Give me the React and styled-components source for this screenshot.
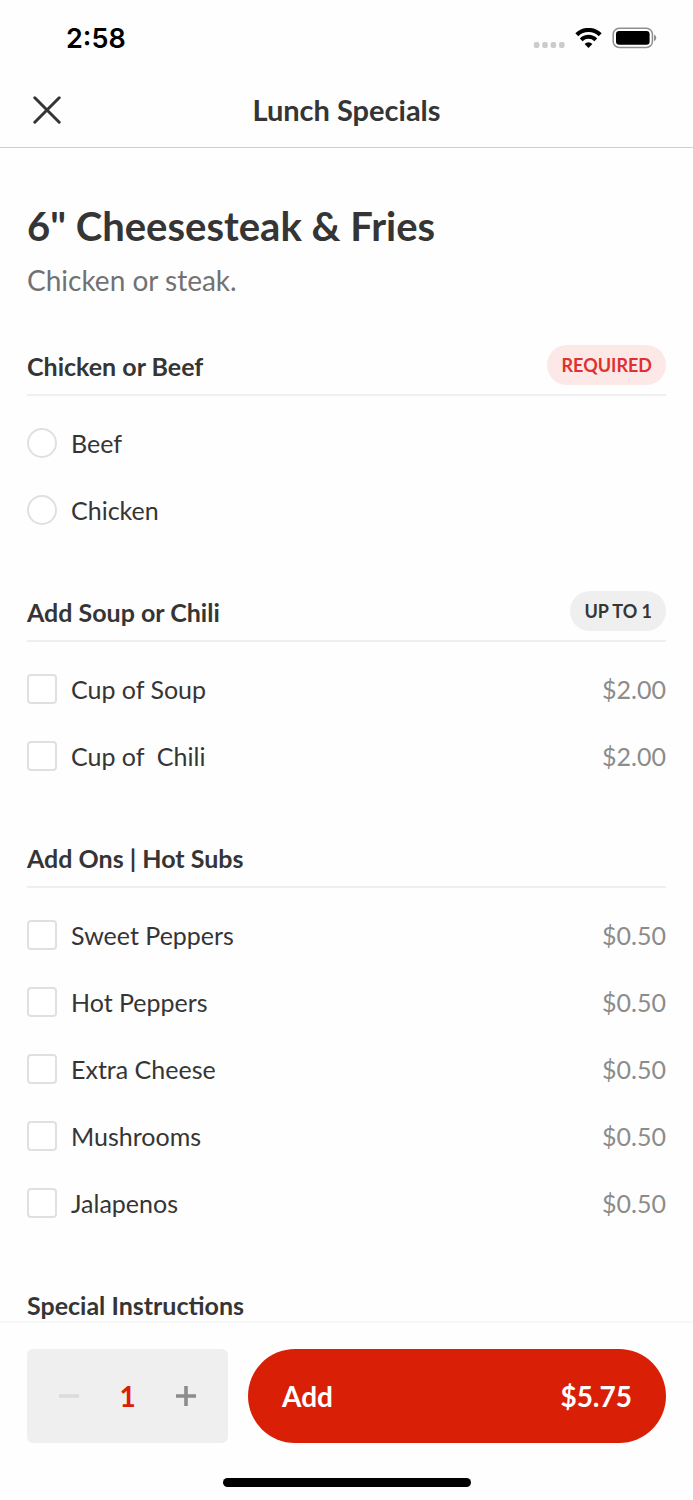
import React, { useState } from 'react';
import styled, { createGlobalStyle } from 'styled-components';

const GlobalStyle = createGlobalStyle`
  * {
    box-sizing: border-box;
  }

  body {
    margin: 0;
    background: #fefefe;
    color: #353535;
    font-family: Lato, Carlito, "Liberation Sans", sans-serif;
  }

  button,
  input {
    font: inherit;
    margin: 0;
  }
`;

const Screen = styled.div`
  display: flex;
  flex-direction: column;
  height: 100vh;
`;

const StatusBar = styled.div`
  display: flex;
  justify-content: space-between;
  align-items: center;
  height: 76px;
  padding: 0 36px 0 66px;
  flex-shrink: 0;
`;

const Time = styled.time`
  padding-top: 2px;
  color: #000;
  font-family: Inter, "Liberation Sans", sans-serif;
  font-size: 27px;
  font-weight: 600;
  line-height: 32px;
`;

const StatusIcons = styled.div`
  display: flex;
  align-items: center;
  gap: 10px;
`;

const NavBar = styled.header`
  display: grid;
  grid-template-columns: 40px 1fr 40px;
  align-items: center;
  height: 72px;
  padding: 0 27px 4px;
  border-bottom: 1px solid #cfcfcf;
  flex-shrink: 0;
`;

const NavTitle = styled.div`
  font-size: 29px;
  font-weight: 700;
  line-height: 34px;
  text-align: center;
`;

const IconButton = styled.button`
  display: flex;
  align-items: center;
  justify-content: center;
  width: 40px;
  height: 40px;
  padding: 0;
  border: 0;
  background: none;
  color: ${(props) => props.$color || '#353535'};
  cursor: pointer;

  &:disabled {
    color: #dcdcdc;
    cursor: default;
  }
`;

const Content = styled.main`
  flex: 1;
  min-height: 0;
  overflow-y: auto;
  scrollbar-width: none;
  padding: 53px 27px 0;
`;

const Title = styled.h1`
  margin: 0;
  font-size: 40px;
  font-weight: 700;
  line-height: 50px;
`;

const Description = styled.p`
  margin: 12px 0 48px;
  color: #727272;
  font-size: 28px;
  line-height: 34px;
`;

const Section = styled.section`
  margin-bottom: 48px;
`;

const SectionHeader = styled.div`
  display: flex;
  justify-content: space-between;
  align-items: flex-start;
  height: 51px;
  border-bottom: 2px solid #efefef;
`;

const SectionTitle = styled.h2`
  margin: 0;
  padding-top: 5px;
  font-size: 25px;
  font-weight: 700;
  line-height: 32px;
`;

const Badge = styled.span`
  padding: 0 14px;
  border-radius: 20px;
  background: ${(props) => (props.$required ? '#fde8e8' : '#efefef')};
  color: ${(props) => (props.$required ? '#e03131' : '#353535')};
  font-size: 18px;
  font-weight: 700;
  line-height: 40px;
`;

const Options = styled.div`
  padding-top: 13px;
`;

const Option = styled.label`
  display: flex;
  align-items: center;
  gap: 14px;
  height: 67px;
  font-size: 25px;
  line-height: 32px;
  cursor: pointer;
`;

const OptionInput = styled.input`
  appearance: none;
  width: 30px;
  height: 30px;
  border: 2px solid #e0e0e0;
  border-radius: ${(props) => (props.type === 'radio' ? '50%' : '4px')};
  background: #fff;
  flex-shrink: 0;

  &:checked {
    border-color: #d92007;
    background: #d92007;
    box-shadow: inset 0 0 0 5px #fff;
  }
`;

const OptionName = styled.span`
  flex: 1;
  white-space: pre;
`;

const OptionPrice = styled.span`
  color: #8c8c8c;
`;

const Footer = styled.footer`
  display: flex;
  flex-direction: column;
  align-items: center;
  flex-shrink: 0;
  padding: 26px 27px 13px;
  border-top: 2px solid #f7f7f7;
`;

const Actions = styled.div`
  display: flex;
  gap: 20px;
  width: 100%;
`;

const Stepper = styled.div`
  display: flex;
  justify-content: space-between;
  align-items: center;
  width: 201px;
  height: 94px;
  padding: 0 22px;
  border-radius: 6px;
  background: #efefef;
`;

const Quantity = styled.output`
  color: #d92007;
  font-size: 28px;
  font-weight: 700;
  line-height: 34px;
`;

const AddButton = styled.button`
  display: flex;
  justify-content: space-between;
  align-items: center;
  flex: 1;
  height: 94px;
  padding: 0 34px;
  border: 0;
  border-radius: 47px;
  background: #d92007;
  color: #fff;
  font-size: 28px;
  font-weight: 700;
  line-height: 34px;
  cursor: pointer;
`;

const HomeIndicator = styled.div`
  width: 248px;
  height: 9px;
  margin-top: 35px;
  border-radius: 5px;
  background: #000;
`;

const groups = [
  {
    title: 'Chicken or Beef',
    badge: 'REQUIRED',
    required: true,
    type: 'radio',
    options: [{ name: 'Beef' }, { name: 'Chicken' }],
  },
  {
    title: 'Add Soup or Chili',
    badge: 'UP TO 1',
    type: 'checkbox',
    options: [
      { name: 'Cup of Soup', price: 2 },
      { name: 'Cup of  Chili', price: 2 },
    ],
  },
  {
    title: 'Add Ons | Hot Subs',
    type: 'checkbox',
    options: [
      { name: 'Sweet Peppers', price: 0.5 },
      { name: 'Hot Peppers', price: 0.5 },
      { name: 'Extra Cheese', price: 0.5 },
      { name: 'Mushrooms', price: 0.5 },
      { name: 'Jalapenos', price: 0.5 },
    ],
  },
];

function SignalIcon() {
  return (
    <svg width="32" height="22" viewBox="0 0 32 22" fill="#cbcbcb">
      <rect x="0.8" y="15" width="5.6" height="6" rx="2" />
      <rect x="9.2" y="15" width="5.6" height="6" rx="2" />
      <rect x="17.6" y="15" width="5.6" height="6" rx="2" />
      <rect x="26" y="15" width="5.6" height="6" rx="2" />
    </svg>
  );
}

function WifiIcon() {
  return (
    <svg width="27" height="20" viewBox="0 0 27 20">
      <path d="M1.8 6.8a16.6 16.6 0 0 1 23.4 0" fill="none" stroke="#000" strokeWidth="4.2" />
      <path d="M6.2 11.8a10.4 10.4 0 0 1 14.6 0" fill="none" stroke="#000" strokeWidth="4" />
      <path d="M13.5 20l-3.9-4.1a5.6 5.6 0 0 1 7.8 0z" fill="#000" />
    </svg>
  );
}

function BatteryIcon() {
  return (
    <svg width="45" height="22" viewBox="0 0 45 22">
      <rect x="1.2" y="1.2" width="39.2" height="19.2" rx="6" fill="none" stroke="#8f8f8f" strokeWidth="1.5" />
      <rect x="4" y="4" width="33.6" height="13.8" rx="3.2" fill="#000" />
      <path d="M42 7.6c3 1.4 3 5.2 0 6.6z" fill="#8f8f8f" />
    </svg>
  );
}

function CloseIcon() {
  return (
    <svg width="28" height="28" viewBox="0 0 28 28" fill="none" stroke="currentColor" strokeWidth="3" strokeLinecap="round">
      <path d="M1.8 1.8l24.4 24.4M26.2 1.8L1.8 26.2" />
    </svg>
  );
}

function StepIcon({ plus }) {
  return (
    <svg width="20" height="20" viewBox="0 0 20 20" fill="none" stroke="currentColor" strokeWidth="3.6">
      <path d={plus ? 'M0 10h20M10 0v20' : 'M0 10h20'} />
    </svg>
  );
}

function OptionGroup({ group }) {
  return (
    <Section>
      <SectionHeader>
        <SectionTitle>{group.title}</SectionTitle>
        {group.badge && <Badge $required={group.required}>{group.badge}</Badge>}
      </SectionHeader>
      <Options>
        {group.options.map((option) => (
          <Option key={option.name}>
            <OptionInput type={group.type} name={group.title} value={option.name} />
            <OptionName>{option.name}</OptionName>
            {option.price && <OptionPrice>${option.price.toFixed(2)}</OptionPrice>}
          </Option>
        ))}
      </Options>
    </Section>
  );
}

function App() {
  const [quantity, setQuantity] = useState(1);

  return (
    <>
      <GlobalStyle />
      <Screen>
        <StatusBar>
          <Time>2:58</Time>
          <StatusIcons>
            <SignalIcon />
            <WifiIcon />
            <BatteryIcon />
          </StatusIcons>
        </StatusBar>
        <NavBar>
          <IconButton type="button" aria-label="Close">
            <CloseIcon />
          </IconButton>
          <NavTitle>Lunch Specials</NavTitle>
        </NavBar>
        <Content>
          <Title>6" Cheesesteak &amp; Fries</Title>
          <Description>Chicken or steak.</Description>
          {groups.map((group) => (
            <OptionGroup key={group.title} group={group} />
          ))}
          <SectionHeader>
            <SectionTitle>Special Instructions</SectionTitle>
          </SectionHeader>
        </Content>
        <Footer>
          <Actions>
            <Stepper>
              <IconButton
                type="button"
                aria-label="Decrease quantity"
                disabled={quantity === 1}
                onClick={() => setQuantity(quantity - 1)}
              >
                <StepIcon />
              </IconButton>
              <Quantity>{quantity}</Quantity>
              <IconButton
                type="button"
                aria-label="Increase quantity"
                $color="#8c8c8c"
                onClick={() => setQuantity(quantity + 1)}
              >
                <StepIcon plus />
              </IconButton>
            </Stepper>
            <AddButton type="button">
              <span>Add</span>
              <span>${(quantity * 5.75).toFixed(2)}</span>
            </AddButton>
          </Actions>
          <HomeIndicator />
        </Footer>
      </Screen>
    </>
  );
}

export default App;
